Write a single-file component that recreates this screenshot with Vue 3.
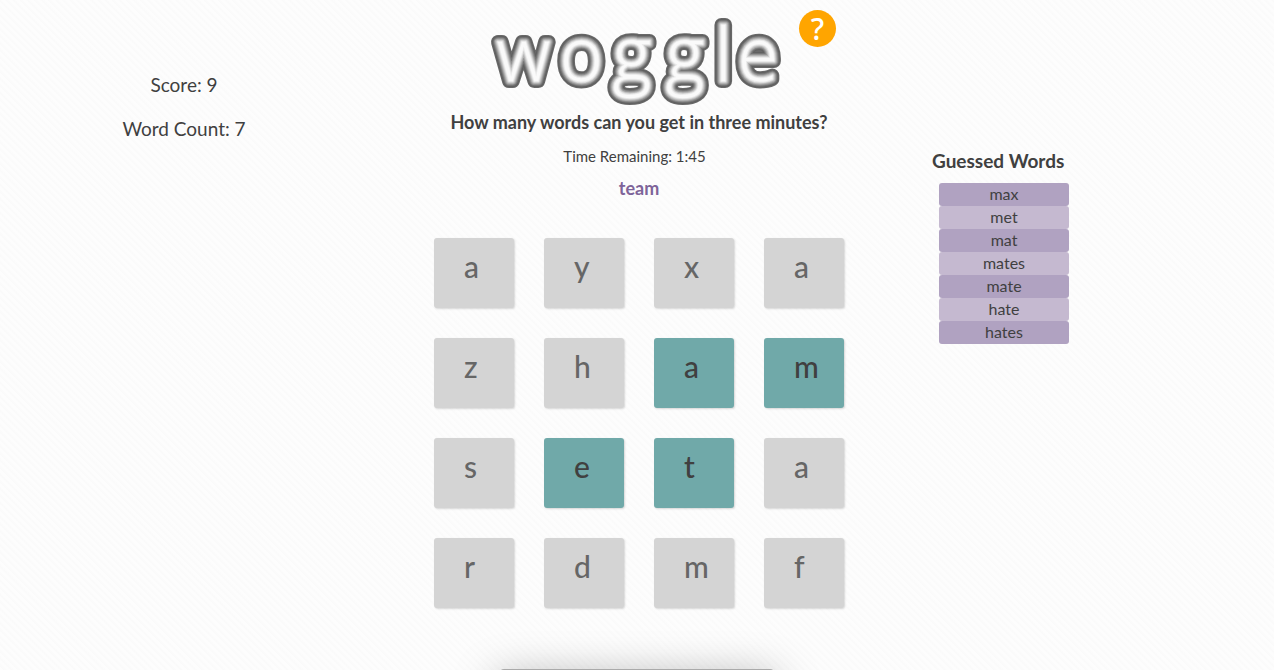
<script setup>
import { ref } from 'vue'

const score = ref(9)
const timeLeft = ref('1:45')
const current = ref('team')
const words = ref(['max', 'met', 'mat', 'mates', 'mate', 'hate', 'hates'])
const letters = 'ayxazhamsetardmf'.split('')
const selected = ref([6, 7, 9, 10])

const logoLayers = [
  { width: 14, color: '#686868' },
  { width: 12, color: '#606060' },
  { width: 10, color: '#747474' },
  { width: 8, color: '#929292' },
  { width: 6, color: '#b2b2b2' },
  { width: 4, color: '#d0d0d0' },
  { width: 2, color: '#ebebeb' },
  { width: 0, color: '#fafafa' },
]
</script>

<template>
  <main class="page">
    <section class="stats">
      <p>Score: {{ score }}</p>
      <p>Word Count: {{ words.length }}</p>
    </section>

    <section class="game">
      <header class="brand">
        <svg class="logo" viewBox="0 0 300 110" role="img" aria-label="woggle">
          <text
            v-for="layer in logoLayers"
            :key="layer.width"
            x="8 71 124 177 226 249"
            y="81"
            :fill="layer.color"
            :stroke="layer.color"
            :stroke-width="layer.width"
          >woggle</text>
        </svg>
        <button class="help" type="button" aria-label="Help">?</button>
      </header>
      <h1>How many words can you get in three minutes?</h1>
      <p class="time">Time Remaining: {{ timeLeft }}</p>
      <p class="current">{{ current }}</p>
      <div class="board">
        <button
          v-for="(letter, i) in letters"
          :key="i"
          type="button"
          class="tile"
          :class="{ active: selected.includes(i) }"
        >{{ letter }}</button>
      </div>
    </section>

    <aside class="guessed">
      <h2>Guessed Words</h2>
      <ul>
        <li v-for="word in words" :key="word">{{ word }}</li>
      </ul>
    </aside>
    <div class="dock"></div>
  </main>
</template>

<style>
body {
  margin: 0;
  background: #fcfcfc;
}
</style>

<style scoped>
.page {
  box-sizing: border-box;
  position: relative;
  min-height: 100vh;
  overflow: hidden;
  display: grid;
  grid-template-columns: 2fr 3fr 2fr;
  color: #404040;
  font-family: Lato, "Open Sans", sans-serif;
  background: repeating-linear-gradient(45deg, #fdfdfd 0, #fdfdfd 2px, #fafafa 3px, #fcfcfc 5px);
}
h1, h2, p, ul {
  margin: 0;
}
button {
  border: 0;
  font-family: inherit;
  cursor: pointer;
}
.stats {
  padding: 73px 0 0 4px;
  display: flex;
  flex-direction: column;
  gap: 20px;
  text-align: center;
  font-size: 19px;
  line-height: 24px;
}
.game {
  display: flex;
  flex-direction: column;
  align-items: center;
  padding-left: 4px;
}
.brand {
  position: relative;
  width: 300px;
}
.logo {
  display: block;
  width: 100%;
}
.logo text {
  font-family: "Open Sans", sans-serif;
  font-size: 73px;
  font-weight: 300;
  stroke-linejoin: round;
  stroke-linecap: round;
}
.help {
  position: absolute;
  top: 10px;
  left: calc(100% + 10px);
  width: 37px;
  height: 37px;
  padding: 0;
  border-radius: 50%;
  background: #ffa500;
  color: #fff;
  font-family: "Noto Sans", sans-serif;
  font-size: 30px;
  font-weight: 500;
  line-height: 34px;
}
h1 {
  font-size: 18px;
  line-height: 24px;
}
.time {
  margin-top: 12px;
  padding-right: 9px;
  font-size: 15px;
  line-height: 20px;
}
.current {
  margin-top: 10px;
  font-size: 18px;
  font-weight: 700;
  line-height: 24px;
  color: #7e6499;
}
.board {
  margin-top: 38px;
  display: grid;
  grid-template-columns: repeat(4, 80px);
  gap: 30px;
}
.tile {
  height: 70px;
  padding: 0 0 14px 30px;
  border-radius: 3px;
  background: #d4d4d4;
  color: #666;
  box-shadow: 1px 1px 2px rgba(0, 0, 0, 0.15);
  font-size: 30px;
  font-weight: 500;
  line-height: 36px;
  text-align: left;
}
.tile.active {
  background: #70a9a9;
  color: #404040;
}
.guessed {
  padding: 149px 0 0 22px;
}
.guessed h2 {
  font-size: 19px;
  line-height: 24px;
}
.guessed ul {
  width: 130px;
  margin: 10px 0 0 7px;
  padding: 0;
  list-style: none;
}
.guessed li {
  padding-bottom: 2px;
  border-radius: 3px;
  background: #c5b9d0;
  font-size: 16px;
  line-height: 21px;
  text-align: center;
}
.guessed li:nth-child(odd) {
  background: #b0a2c1;
}
.dock {
  position: absolute;
  bottom: -19px;
  left: 50%;
  width: 274px;
  height: 20px;
  transform: translateX(-50%);
  border-radius: 4px;
  background: #aaa;
  box-shadow: 0 14px 44px 4px rgba(0, 0, 0, 0.36);
}
</style>
